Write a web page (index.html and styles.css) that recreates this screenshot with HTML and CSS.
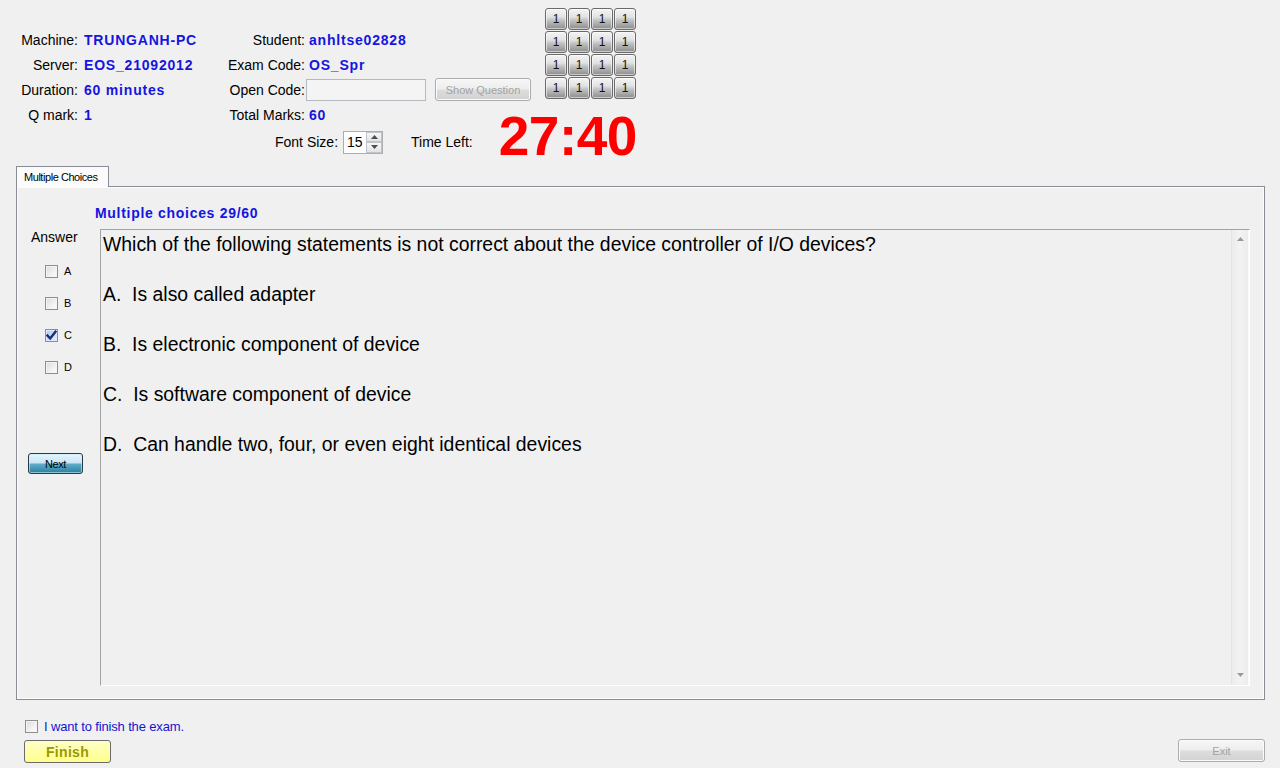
FILE: index.html
```html
<!DOCTYPE html>
<html>
<head>
<meta charset="utf-8">
<title>EOS Exam</title>
<link rel="stylesheet" href="styles.css">
</head>
<body>
<div class="app">
  <header class="header">
    <div class="top">
      <div class="info">
        <span class="lbl">Machine:</span><span class="val">TRUNGANH-PC</span><span class="lbl lbl2">Student:</span><span class="val val2">anhltse02828</span>
        <span class="lbl">Server:</span><span class="val">EOS_21092012</span><span class="lbl lbl2">Exam Code:</span><span class="val val2">OS_Spr</span>
        <span class="lbl">Duration:</span><span class="val">60 minutes</span><span class="lbl lbl2">Open Code:</span>
        <div class="opencode"><div class="textinput"></div><div class="btn btn-disabled btn-show">Show Question</div></div>
        <span class="lbl">Q mark:</span><span class="val">1</span><span class="lbl lbl2">Total Marks:</span><span class="val val2">60</span>
      </div>
      <div class="cells">
        <div class="cell">1</div><div class="cell">1</div><div class="cell">1</div><div class="cell">1</div>
        <div class="cell">1</div><div class="cell">1</div><div class="cell">1</div><div class="cell">1</div>
        <div class="cell">1</div><div class="cell">1</div><div class="cell">1</div><div class="cell">1</div>
        <div class="cell">1</div><div class="cell">1</div><div class="cell">1</div><div class="cell">1</div>
      </div>
    </div>
    <div class="fontrow">
      <span class="plain">Font Size:</span>
      <div class="spinner">
        <span class="spin-value">15</span>
        <div class="spin-btns">
          <div class="spin-btn"><svg width="7" height="4" viewBox="0 0 7 4"><path d="M0 4 L3.5 0 L7 4 Z" fill="#4d4d4d"/></svg></div>
          <div class="spin-btn"><svg width="7" height="4" viewBox="0 0 7 4"><path d="M0 0 L3.5 4 L7 0 Z" fill="#4d4d4d"/></svg></div>
        </div>
      </div>
      <span class="plain timeleft">Time Left:</span>
      <span class="timer">27:40</span>
    </div>
  </header>

  <div class="tabs"><div class="tab">Multiple Choices</div></div>
  <section class="panel">
    <div class="title">Multiple choices 29/60</div>
    <div class="body">
      <div class="answers">
        <div class="answer-lbl">Answer</div>
        <div class="opt"><span class="chk"></span><span class="opt-lbl">A</span></div>
        <div class="opt"><span class="chk"></span><span class="opt-lbl">B</span></div>
        <div class="opt"><span class="chk chk-on"><svg width="11" height="11" viewBox="0 0 11 11"><path d="M1.5 5.5 L4.2 8.5 L9.5 1.8" fill="none" stroke="#1b2a7a" stroke-width="2.4" stroke-linecap="square"/></svg></span><span class="opt-lbl">C</span></div>
        <div class="opt"><span class="chk"></span><span class="opt-lbl">D</span></div>
        <div class="btn btn-next">Next</div>
      </div>
      <div class="question">
        <div class="qtext">Which of the following statements is not correct about the device controller of I/O devices?

A.  Is also called adapter

B.  Is electronic component of device

C.  Is software component of device

D.  Can handle two, four, or even eight identical devices</div>
        <div class="scrollbar">
          <svg width="7" height="4" viewBox="0 0 7 4"><path d="M0 4 L3.5 0 L7 4 Z" fill="#9a9a9a"/></svg>
          <svg width="7" height="4" viewBox="0 0 7 4"><path d="M0 0 L3.5 4 L7 0 Z" fill="#9a9a9a"/></svg>
        </div>
      </div>
    </div>
  </section>

  <footer class="footer">
    <div class="footer-left">
      <div class="finish-row"><span class="chk"></span><span class="finish-lbl">I want to finish the exam.</span></div>
      <div class="btn btn-finish">Finish</div>
    </div>
    <div class="btn btn-disabled btn-exit">Exit</div>
  </footer>
</div>
</body>
</html>
```

FILE: styles.css
```css
html, body {
  margin: 0;
  padding: 0;
  background: #f0f0f0;
}
body {
  width: 1280px;
  height: 768px;
  overflow: hidden;
  font-family: "Liberation Sans", Arial, sans-serif;
  color: #000;
}
.app {
  display: flex;
  flex-direction: column;
}

/* Header */
.header {
  padding-top: 8px;
}
.top {
  display: flex;
  align-items: flex-start;
}
.info {
  margin-left: 16px;
  margin-top: 19px;
  margin-bottom: 1px;
  width: 529px;
  display: grid;
  grid-template-columns: 62px 148px 80px 1fr;
  grid-auto-rows: 25px;
  align-items: center;
  font-size: 14px;
}
.lbl {
  text-align: right;
  white-space: nowrap;
}
.lbl2 {
  padding-right: 1px;
}
.val {
  padding-left: 6px;
  font-weight: bold;
  color: #1515e0;
  letter-spacing: 0.8px;
  white-space: nowrap;
}
.val2 {
  padding-left: 3px;
}
.opencode {
  display: flex;
  align-items: center;
}
.textinput {
  width: 118px;
  height: 20px;
  border: 1px solid #b5b8be;
  background: #f4f4f4;
}
.btn {
  box-sizing: border-box;
  display: flex;
  align-items: center;
  justify-content: center;
  border-radius: 3px;
  font-size: 11px;
  white-space: nowrap;
}
.btn-disabled {
  border: 1px solid #a9adb0;
  background: linear-gradient(#f6f6f6 0%, #eeeeee 45%, #dcdcdc 55%, #d2d2d2 100%);
  color: #a3a3a3;
  box-shadow: inset 0 0 0 1px #fbfbfb;
}
.btn-show {
  margin-left: 9px;
  width: 96px;
  height: 23px;
}
.cells {
  display: grid;
  grid-template-columns: repeat(4, 22px);
  grid-auto-rows: 22px;
  gap: 1px;
}
.cell {
  box-sizing: border-box;
  border: 1px solid #6a6a6a;
  border-radius: 3px;
  background: linear-gradient(#f4f4f4 0%, #e2e2e2 40%, #c4c4c4 55%, #8c8c8c 100%);
  box-shadow: inset 0 0 0 1px rgba(255,255,255,0.55);
  font-size: 12px;
  display: flex;
  align-items: center;
  justify-content: center;
  color: #111;
}
.fontrow {
  margin-top: 2px;
  margin-left: 275px;
  height: 24px;
  display: flex;
  align-items: center;
  font-size: 14px;
}
.plain {
  white-space: nowrap;
}
.spinner {
  margin-left: 5px;
  box-sizing: border-box;
  width: 40px;
  height: 23px;
  border: 1px solid #abadb3;
  background: #fff;
  display: flex;
  align-items: center;
  justify-content: space-between;
}
.spin-value {
  padding-left: 3px;
  font-size: 14px;
}
.spin-btns {
  width: 16px;
  height: 21px;
  display: flex;
  flex-direction: column;
}
.spin-btn {
  flex: 1;
  box-sizing: border-box;
  border: 1px solid #c0c3c8;
  background: linear-gradient(#f7f7f7, #e2e2e2);
  display: flex;
  align-items: center;
  justify-content: center;
}
.timeleft {
  margin-left: 28px;
}
.timer {
  margin-left: 26px;
  align-self: flex-start;
  margin-top: -6px;
  font-size: 55px;
  line-height: 24px;
  font-weight: bold;
  color: #ff0000;
  letter-spacing: -0.5px;
  white-space: nowrap;
}

/* Tabs */
.tabs {
  margin-top: 12px;
  margin-left: 16px;
  display: flex;
  position: relative;
  z-index: 1;
}
.tab {
  box-sizing: border-box;
  width: 93px;
  height: 21px;
  margin-bottom: -1px;
  padding-left: 7px;
  border: 1px solid #898c95;
  border-bottom: none;
  background: #fbfbfb;
  font-size: 11px;
  letter-spacing: -0.45px;
  line-height: 20px;
  white-space: nowrap;
}
.panel {
  box-sizing: border-box;
  margin: 0 15px 0 16px;
  height: 514px;
  border: 1px solid #898c95;
  box-shadow: inset 1px 1px 0 #fdfdfd, inset -1px -1px 0 #fdfdfd;
  padding-top: 18px;
}
.title {
  padding-left: 78px;
  font-size: 14px;
  line-height: 16px;
  font-weight: bold;
  color: #1515e0;
  letter-spacing: 0.7px;
}
.body {
  margin-top: 8px;
  display: flex;
}
.answers {
  width: 83px;
  display: flex;
  flex-direction: column;
}
.answer-lbl {
  padding-left: 14px;
  font-size: 14px;
  line-height: 16px;
}
.opt {
  height: 32px;
  padding-left: 28px;
  display: flex;
  align-items: center;
}
.answer-lbl + .opt {
  margin-top: 10px;
}
.chk {
  box-sizing: border-box;
  width: 13px;
  height: 13px;
  border: 1px solid #8e8f8f;
  background: linear-gradient(135deg, #d9d9d9 0%, #f2f2f2 60%, #fdfdfd 100%);
  box-shadow: inset 0 0 0 1px #f4f4f4;
  display: flex;
  align-items: center;
  justify-content: center;
  flex: none;
}
.chk-on {
  background: linear-gradient(135deg, #a9cdee 0%, #d2e6f7 70%, #eaf3fc 100%);
  box-shadow: inset 0 0 0 1px #dde9f7;
}
.opt-lbl {
  margin-left: 6px;
  font-size: 11px;
}
.btn-next {
  margin-top: 70px;
  margin-left: 11px;
  width: 55px;
  height: 21px;
  border: 1px solid #2a3a44;
  border-radius: 3px;
  background: linear-gradient(#e6f5fc 0%, #c9e7f6 45%, #5aaac8 55%, #2e7f9c 100%);
  box-shadow: inset 0 0 0 1px rgba(200,240,255,0.6);
  letter-spacing: -0.4px;
  color: #000;
}
.question {
  box-sizing: border-box;
  width: 1150px;
  height: 457px;
  border-top: 1px solid #a3a3a3;
  border-left: 1px solid #a3a3a3;
  border-bottom: 1px solid #ffffff;
  border-right: 1px solid #ffffff;
  display: flex;
}
.qtext {
  flex: 1;
  padding-left: 2px;
  padding-top: 2px;
  font-size: 19.4px;
  line-height: 25px;
  white-space: pre-wrap;
}
.scrollbar {
  width: 16px;
  border-left: 1px solid #e4e4e4;
  border-right: 1px solid #fafafa;
  background: linear-gradient(90deg, #ececec, #f3f3f3 50%, #ececec);
  display: flex;
  flex-direction: column;
  align-items: center;
  justify-content: space-between;
  padding: 7px 0 8px;
}

/* Footer */
.footer {
  margin-top: 17px;
  padding: 0 15px 0 24px;
  display: flex;
  justify-content: space-between;
  align-items: flex-end;
}
.footer-left {
  display: flex;
  flex-direction: column;
}
.finish-row {
  height: 18px;
  display: flex;
  align-items: center;
  padding-left: 1px;
}
.finish-lbl {
  margin-left: 6px;
  font-size: 13px;
  letter-spacing: -0.15px;
  color: #1515d0;
}
.btn-finish {
  margin-top: 5px;
  width: 87px;
  height: 23px;
  border: 1px solid #6b6b6b;
  border-radius: 3px;
  background: linear-gradient(#ffffc8 0%, #ffffa8 50%, #ffff8c 100%);
  font-size: 14px;
  font-weight: bold;
  color: #9a9a00;
  letter-spacing: 0.3px;
}
.btn-exit {
  width: 87px;
  height: 23px;
  margin-bottom: 1px;
}
```
